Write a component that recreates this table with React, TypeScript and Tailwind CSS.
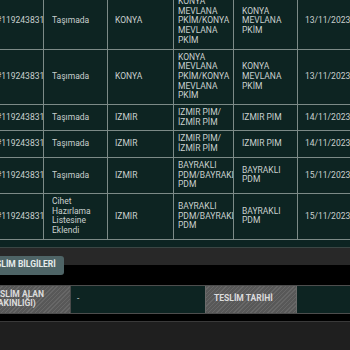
import React from 'react'

type Cell = string | string[]

interface Row {
  id: string
  status: Cell
  city: Cell
  route: Cell
  branch: Cell
  date: string
}

const rows: Row[] = [
  {
    id: '#119243831',
    status: 'Taşımada',
    city: 'KONYA',
    route: ['KONYA', 'MEVLANA', 'PKİM/KONYA', 'MEVLANA', 'PKİM'],
    branch: ['KONYA', 'MEVLANA', 'PKİM'],
    date: '13/11/2023',
  },
  {
    id: '#119243831',
    status: 'Taşımada',
    city: 'KONYA',
    route: ['KONYA', 'MEVLANA', 'PKİM/KONYA', 'MEVLANA', 'PKİM'],
    branch: ['KONYA', 'MEVLANA', 'PKİM'],
    date: '13/11/2023',
  },
  {
    id: '#119243831',
    status: 'Taşımada',
    city: 'İZMİR',
    route: ['İZMİR PİM/', 'İZMİR PİM'],
    branch: 'İZMİR PİM',
    date: '14/11/2023',
  },
  {
    id: '#119243831',
    status: 'Taşımada',
    city: 'İZMİR',
    route: ['İZMİR PİM/', 'İZMİR PİM'],
    branch: 'İZMİR PİM',
    date: '14/11/2023',
  },
  {
    id: '#119243831',
    status: 'Taşımada',
    city: 'İZMİR',
    route: ['BAYRAKLI', 'PDM/BAYRAKLI', 'PDM'],
    branch: ['BAYRAKLI', 'PDM'],
    date: '15/11/2023',
  },
  {
    id: '#119243831',
    status: ['Cihet', 'Hazırlama', 'Listesine', 'Eklendi'],
    city: 'İZMİR',
    route: ['BAYRAKLI', 'PDM/BAYRAKLI', 'PDM'],
    branch: ['BAYRAKLI', 'PDM'],
    date: '15/11/2023',
  },
]

function Lines({ value }: { value: Cell }) {
  const list = Array.isArray(value) ? value : [value]
  return (
    <div className="overflow-hidden whitespace-nowrap">
      {list.map((l, i) => (
        <div key={i}>{l}</div>
      ))}
    </div>
  )
}

const td = 'border border-[#7c8a87] align-middle py-[3px]'
const hatch =
  'bg-[repeating-linear-gradient(135deg,#585858_0px,#585858_2px,#676767_2px,#676767_3px)]'

export default function App() {
  return (
    <div
      className="w-[350px] h-[350px] overflow-hidden bg-[#1f1f1f] text-[8.5px] leading-[9.7px]"
      style={{ fontFamily: 'Roboto, "Noto Sans", sans-serif' }}
    >
      <div className="bg-[#0d2422] pb-[7px] border-b border-[#3a4644] mt-[-7px]">
        <table className="table-fixed border-collapse ml-[-12px] w-[377px] text-[#c9d0ce]">
          <colgroup>
            <col className="w-[55px]" />
            <col className="w-[64px]" />
            <col className="w-[66px]" />
            <col className="w-[60px]" />
            <col className="w-[64px]" />
            <col className="w-[68px]" />
          </colgroup>
          <tbody>
            {rows.map((r, i) => (
              <tr key={i}>
                <td className={`${td} pl-[7px] pr-0 whitespace-nowrap`}>{r.id}</td>
                <td className={`${td} pl-[8px] pr-[4px]`}>
                  <Lines value={r.status} />
                </td>
                <td className={`${td} pl-[7px] pr-[4px]`}>
                  <Lines value={r.city} />
                </td>
                <td className={`${td} pl-[4px] pr-0`}>
                  <Lines value={r.route} />
                </td>
                <td className={`${td} pl-[8px] pr-[4px]`}>
                  <Lines value={r.branch} />
                </td>
                <td className={`${td} pl-[7px] pr-0 whitespace-nowrap`}>{r.date}</td>
              </tr>
            ))}
          </tbody>
        </table>
      </div>

      <div className="bg-[linear-gradient(to_bottom,#282828_17px,#000_17px)] pt-[8px] pb-[10px]">
        <button className="ml-[-22px] h-[19px] px-[8px] rounded-[3px] bg-[#4e6466] font-bold text-[#e6ecec] whitespace-nowrap">
          TESLİM BİLGİLERİ
        </button>
      </div>

      <div className="flex h-[29px] border-y border-[#4d4d4d] bg-black font-bold text-[#dcdcdc]">
        <div className={`${hatch} ml-[-18px] w-[89px] shrink-0 flex items-center pl-[8px] border-r border-[#4a4a4a]`}>
          <div>
            TESLİM ALAN
            <br />
            (YAKINLIĞI)
          </div>
        </div>
        <div className="w-[134px] shrink-0 bg-[#0d2422] flex items-center pl-[6px] font-normal text-[#c9d0ce]">
          -
        </div>
        <div className={`${hatch} w-[92px] shrink-0 flex items-center pl-[8px] border-x border-[#6a6a6a]`}>
          TESLİM TARİHİ
        </div>
        <div className="flex-1 bg-[#0d2422]" />
      </div>

      <div className="h-[8px] bg-black border-b border-[#3a3a3a]" />
    </div>
  )
}
